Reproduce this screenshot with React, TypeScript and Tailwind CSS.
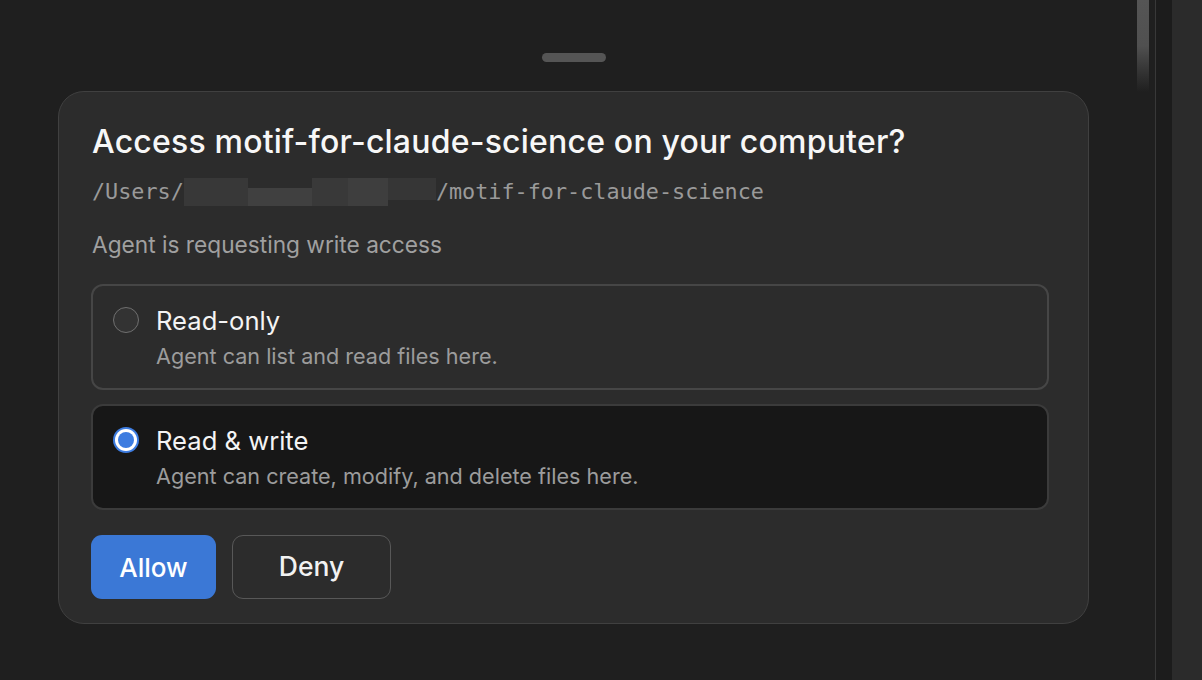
import React from "react";

const sans = { fontFamily: "Inter, 'Noto Sans', sans-serif" };

function Radio({ checked }: { checked: boolean }) {
  if (checked) {
    return (
      <span className="flex h-[26px] w-[26px] shrink-0 items-center justify-center rounded-full bg-[#3d7ce0]">
        <span className="flex h-[22px] w-[22px] items-center justify-center rounded-full bg-white">
          <span className="block h-[16px] w-[16px] rounded-full bg-[#3d7ce0]" />
        </span>
      </span>
    );
  }
  return <span className="block h-[26px] w-[26px] shrink-0 rounded-full border-[1.5px] border-[#707070] bg-[#333333]" />;
}

function Option({
  title,
  desc,
  checked,
}: {
  title: string;
  desc: string;
  checked: boolean;
}) {
  return (
    <div
      className={`flex h-[106px] gap-[17px] rounded-[12px] border-2 pl-[20px] pt-[18px] ${
        checked ? "border-[#3b3b3b] bg-[#171717]" : "border-[#464646] bg-[#2c2c2c]"
      }`}
    >
      <div className="pt-[3px]">
        <Radio checked={checked} />
      </div>
      <div className="flex flex-col">
        <span className="text-[25.6px] leading-[34px] text-[#f4f4f4]">{title}</span>
        <span className="mt-[3px] text-[21.6px] leading-[30px] text-[#9c9c9c]">{desc}</span>
      </div>
    </div>
  );
}

export default function App() {
  return (
    <div className="flex h-[680px] w-[1202px] overflow-hidden bg-[#1f1f1f]" style={sans}>
      <div className="relative flex w-[1155px] flex-col items-start">
        <div className="flex w-[1147px] justify-center pt-[53px]">
          <div className="ml-[1px] h-[9px] w-[64px] rounded-full bg-[#555555]" />
        </div>
        <div className="ml-[58px] mt-[29px] flex h-[533px] w-[1031px] flex-col rounded-[26px] border border-[#404040] bg-[#2c2c2c] px-[33px] pt-[30px]">
          <h1 className="text-[32px] font-medium leading-[40px] tracking-[0.2px] text-[#f7f7f7]">
            Access motif-for-claude-science on your computer?
          </h1>
          <div
            className="mt-[15px] flex items-center text-[21.8px] leading-[30px] text-[#9a9a9a]"
            style={{ fontFamily: "'DejaVu Sans Mono', 'Liberation Mono', monospace" }}
          >
            <span>/Users/</span>
            <span className="flex h-[28px] w-[252px] items-stretch">
              <span className="w-[64px] bg-[#383838]" />
              <span className="mt-[10px] w-[64px] bg-[#404040]" />
              <span className="w-[36px] bg-[#393939]" />
              <span className="w-[40px] bg-[#3e3e3e]" />
              <span className="mb-[6px] w-[48px] bg-[#363636]" />
            </span>
            <span>/motif-for-claude-science</span>
          </div>
          <p className="mt-[23px] text-[22.7px] leading-[30px] text-[#a0a0a0]">Agent is requesting write access</p>
          <div className="mt-[24px] flex w-[958px] flex-col gap-[14px] -ml-[1px]">
            <Option title="Read-only" desc="Agent can list and read files here." checked={false} />
            <Option title="Read & write" desc="Agent can create, modify, and delete files here." checked={true} />
          </div>
          <div className="mt-[25px] flex gap-[16px] -ml-[1px]">
            <button className="h-[64px] w-[125px] rounded-[11px] bg-[#3b78d6] text-[26px] font-medium text-white">
              Allow
            </button>
            <button className="h-[64px] w-[159px] rounded-[11px] border border-[#585858] text-[26.5px] font-medium text-[#f2f2f2]">
              Deny
            </button>
          </div>
        </div>
        {/* scrollbar thumb */}
        <div className="absolute right-[6px] top-0 h-[92px] w-[12px] bg-gradient-to-b from-[#555555] via-[#505050] to-[#1f1f1f]" />
      </div>
      <div className="w-[1px] bg-[#383838]" />
      <div className="w-[16px] bg-[#1c1c1c]" />
      <div className="flex-1 bg-[#2b2b2b]" />
    </div>
  );
}
